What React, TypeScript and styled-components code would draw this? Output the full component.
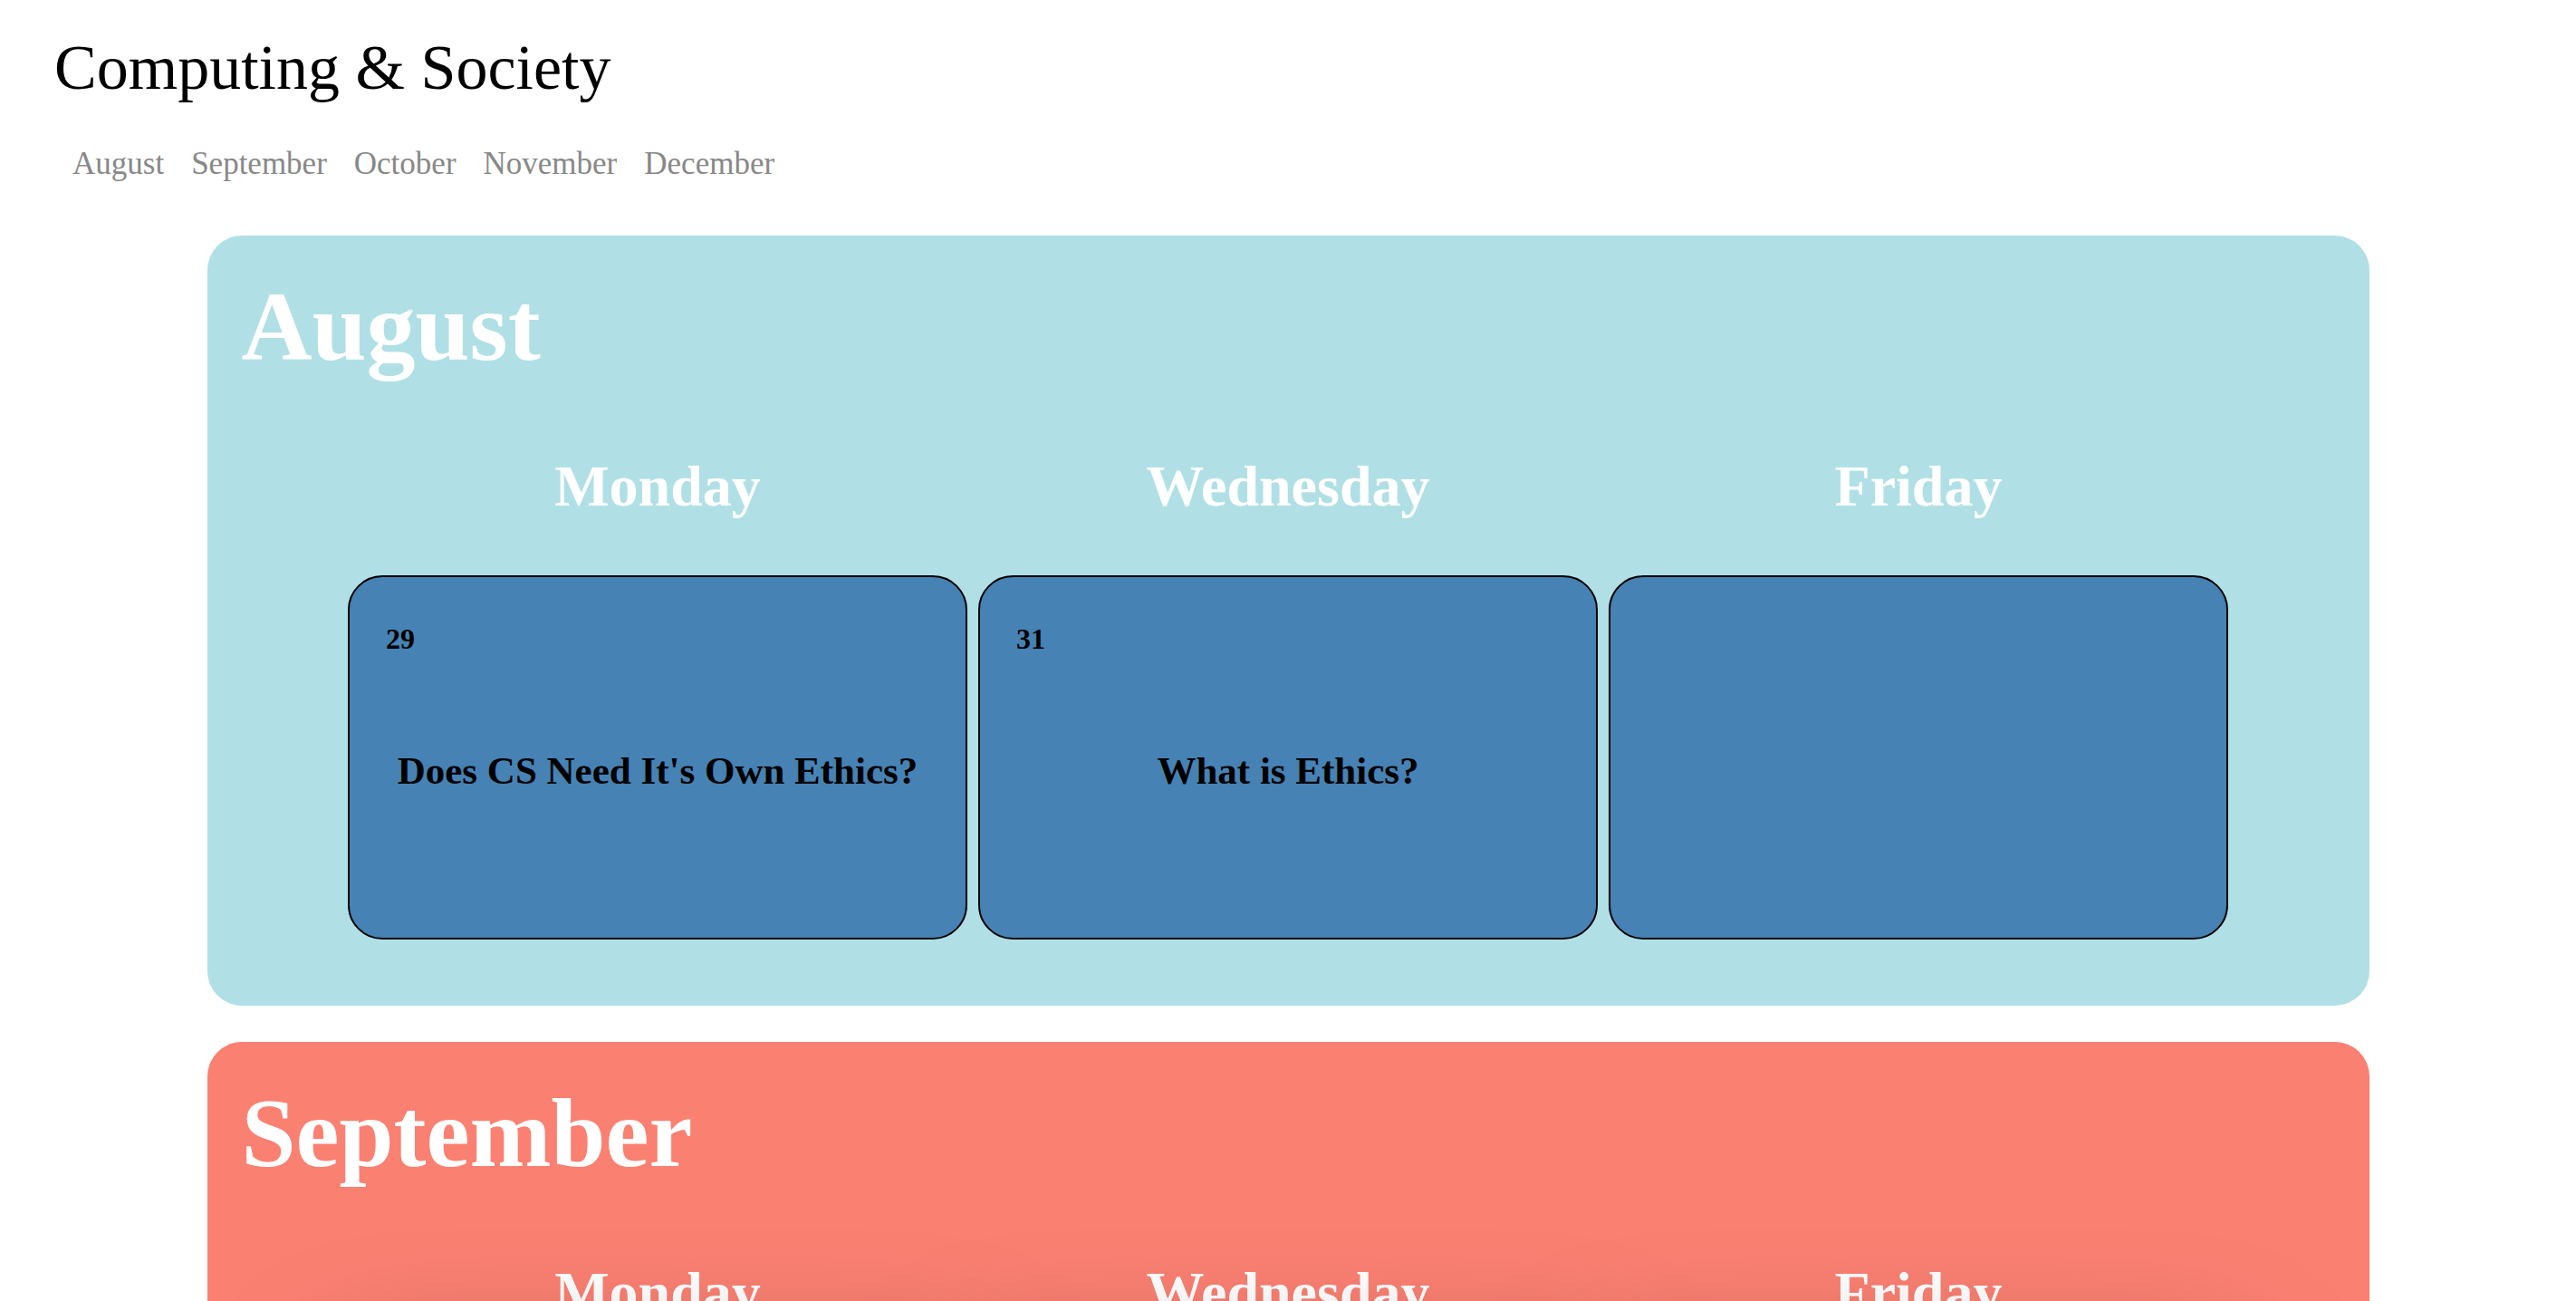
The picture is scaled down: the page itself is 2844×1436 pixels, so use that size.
import React from "react";
import styled, { createGlobalStyle } from "styled-components";

const GlobalStyle = createGlobalStyle`
  html, body {
    margin: 0;
    padding: 0;
    background: #ffffff;
  }
  body {
    font-family: "Liberation Serif", "Times New Roman", serif;
    color: #000;
  }
`;

const Page = styled.div`
  display: flex;
  flex-direction: column;
  padding-bottom: 80px;
`;

const Header = styled.header`
  display: flex;
  flex-direction: column;
`;

const SiteTitle = styled.h1`
  margin: 35px 0 0;
  padding-left: 60px;
  font-size: 70px;
  line-height: 80px;
  font-weight: 400;
  color: #000;
`;

const Nav = styled.nav`
  display: flex;
  gap: 30px;
  margin-top: 46px;
  padding-left: 80px;
`;

const NavLink = styled.a`
  font-size: 35px;
  line-height: 40px;
  color: #888888;
  text-decoration: none;
`;

const Months = styled.main`
  display: flex;
  flex-direction: column;
  align-items: center;
  gap: 40px;
  margin-top: 59px;
`;

const MonthSection = styled.section<{ $bg: string }>`
  width: 2387px;
  box-sizing: border-box;
  padding: 47px 38px 73px;
  border-radius: 38px;
  background: ${(p) => p.$bg};
`;

const MonthTitle = styled.h2`
  margin: 0;
  font-size: 108px;
  line-height: 108px;
  font-weight: 700;
  color: #ffffff;
`;

const WeekGrid = styled.div`
  display: grid;
  grid-template-columns: repeat(3, 684px);
  column-gap: 12px;
  row-gap: 12px;
  justify-content: center;
`;

const DayHeading = styled.h3`
  margin: 90px 0 54px;
  font-size: 64px;
  line-height: 64px;
  font-weight: 700;
  color: #ffffff;
  text-align: center;
`;

const DayCard = styled.div<{ $lifted?: boolean }>`
  position: relative;
  display: flex;
  flex-direction: column;
  height: 402px;
  box-sizing: border-box;
  padding: 52px 40px 0;
  border: 2px solid #000000;
  border-radius: 38px;
  background: #4682b4;
  ${(p) =>
    p.$lifted
      ? `
    z-index: 1;
    box-shadow: 0 0 140px rgba(0, 0, 0, 0.5);
  `
      : ""}
`;

const DateNum = styled.span`
  font-size: 32px;
  line-height: 32px;
  font-weight: 700;
  color: #000;
`;

const Topic = styled.p`
  margin: 108px -30px 0;
  font-size: 43px;
  line-height: 43px;
  font-weight: 700;
  color: #000;
  text-align: center;
`;

type Day = { date?: number; topic?: string };

type Month = {
  name: string;
  color: string;
  lifted?: boolean;
  weeks: Day[][];
};

const months: Month[] = [
  {
    name: "August",
    color: "#b0e0e6",
    weeks: [[{ date: 29, topic: "Does CS Need It's Own Ethics?" }, { date: 31, topic: "What is Ethics?" }, {}]],
  },
  {
    name: "September",
    color: "#fa8072",
    lifted: true,
    weeks: [
      [{}, {}, { date: 2, topic: "Consequentialism" }],
      [{ date: 5, topic: "Labor Day" }, { date: 7, topic: "Deontology" }, { date: 9, topic: "Virtue Ethics" }],
    ],
  },
  {
    name: "October",
    color: "#b0e0e6",
    weeks: [[{ date: 3, topic: "Privacy" }, { date: 5, topic: "Surveillance" }, { date: 7, topic: "Data Ownership" }]],
  },
  {
    name: "November",
    color: "#fa8072",
    weeks: [[{ date: 7, topic: "Algorithmic Bias" }, { date: 9, topic: "Automation & Work" }, { date: 11, topic: "Social Media" }]],
  },
  {
    name: "December",
    color: "#b0e0e6",
    weeks: [[{ date: 5, topic: "AI & Responsibility" }, { date: 7, topic: "Review" }, { date: 9, topic: "Final Reflections" }]],
  },
];

const dayNames = ["Monday", "Wednesday", "Friday"];

export default function App() {
  return (
    <Page>
      <GlobalStyle />
      <Header>
        <SiteTitle>Computing &amp; Society</SiteTitle>
        <Nav>
          {months.map((m) => (
            <NavLink key={m.name} href={`#${m.name.toLowerCase()}`}>
              {m.name}
            </NavLink>
          ))}
        </Nav>
      </Header>
      <Months>
        {months.map((m) => (
          <MonthSection key={m.name} id={m.name.toLowerCase()} $bg={m.color}>
            <MonthTitle>{m.name}</MonthTitle>
            <WeekGrid>
              {dayNames.map((d) => (
                <DayHeading key={d}>{d}</DayHeading>
              ))}
              {m.weeks.flatMap((week, wi) =>
                week.map((day, di) => (
                  <DayCard key={`${wi}-${di}`} $lifted={m.lifted}>
                    {day.date !== undefined && <DateNum>{day.date}</DateNum>}
                    {day.topic && <Topic>{day.topic}</Topic>}
                  </DayCard>
                ))
              )}
            </WeekGrid>
          </MonthSection>
        ))}
      </Months>
    </Page>
  );
}
